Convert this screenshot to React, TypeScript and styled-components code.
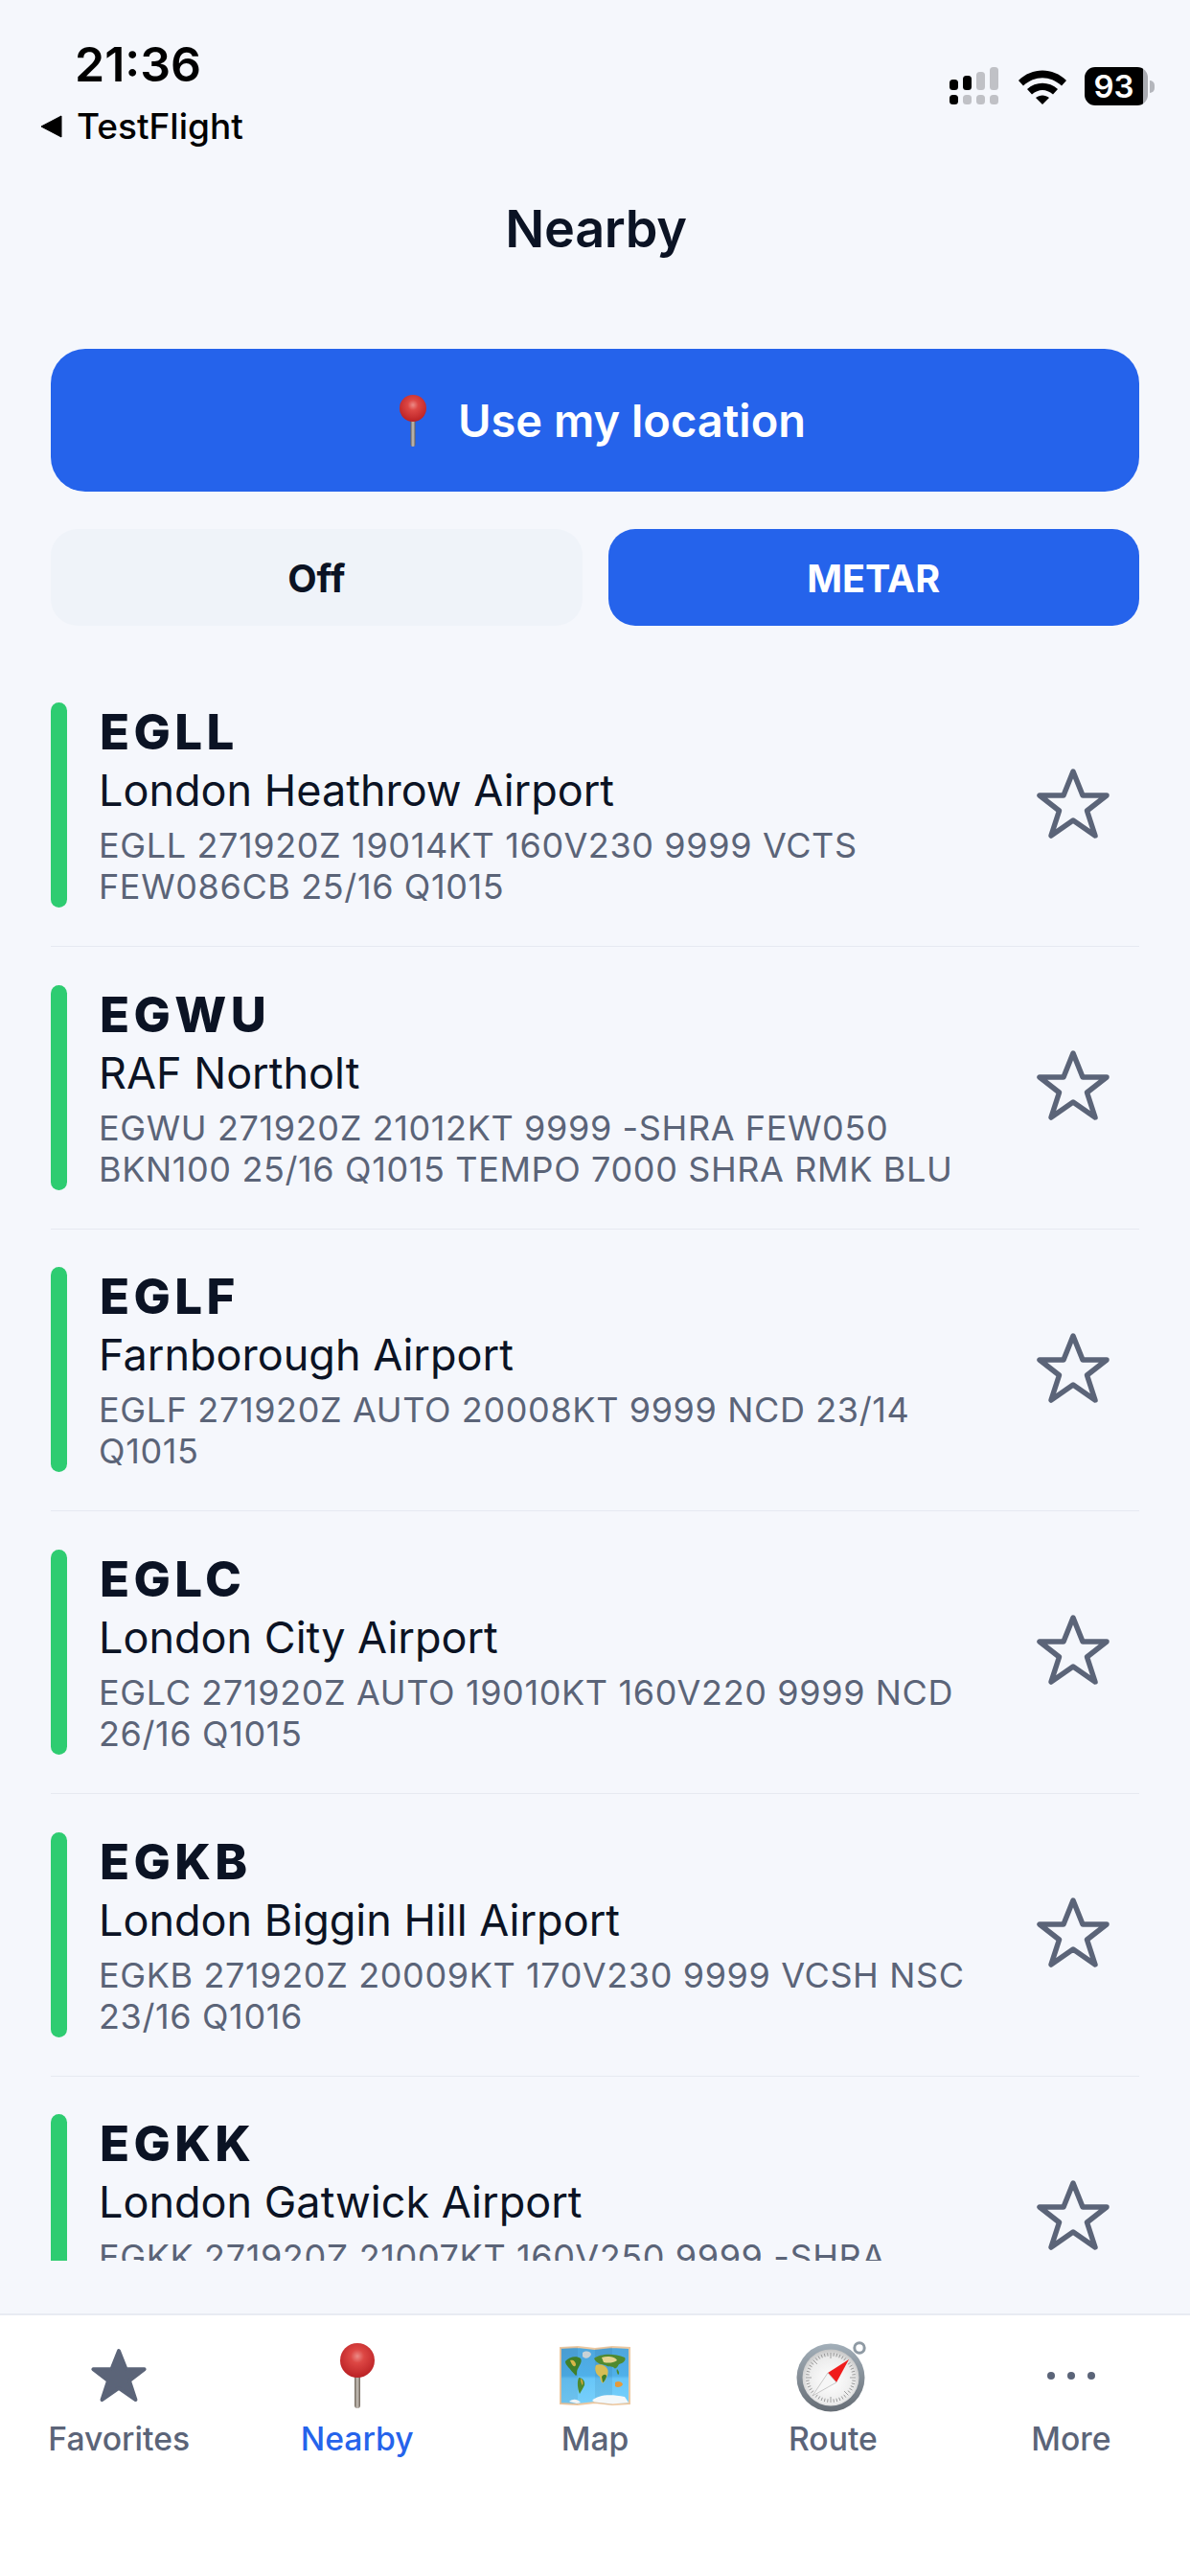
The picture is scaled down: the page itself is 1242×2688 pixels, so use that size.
import React from "react";
import styled, { createGlobalStyle } from "styled-components";

const Global = createGlobalStyle`
  html, body { margin: 0; padding: 0; background: #f5f7fc; }
  * { box-sizing: border-box; }
`;

const Page = styled.div`
  width: 1242px;
  height: 2688px;
  display: flex;
  flex-direction: column;
  background: #f5f7fc;
  font-family: Inter, "Noto Sans", sans-serif;
  color: #0b1324;
  overflow: hidden;
`;

const StatusBar = styled.div`
  height: 160px;
  flex: none;
  display: flex;
  justify-content: space-between;
  align-items: flex-start;
  padding: 38px 37px 0 42px;
`;

const StatusLeft = styled.div`
  display: flex;
  flex-direction: column;
  gap: 14px;
`;

const Clock = styled.div`
  font-size: 50px;
  line-height: 58px;
  font-weight: 600;
  color: #000;
  margin-left: 36px;
`;

const BackLink = styled.div`
  display: flex;
  align-items: center;
  gap: 15px;
  font-size: 37px;
  line-height: 44px;
  font-weight: 500;
  color: #000;
`;

const StatusRight = styled.div`
  display: flex;
  align-items: center;
  gap: 18px;
  margin-top: 32px;
`;

const BatteryWrap = styled.div`
  display: flex;
  align-items: center;
  gap: 2px;
`;

const BatteryBody = styled.div`
  width: 66px;
  height: 40px;
  border-radius: 11px;
  background: linear-gradient(90deg, #000 0 92%, #aaacb2 92% 100%);
  color: #fff;
  font-size: 33px;
  line-height: 40px;
  font-weight: 600;
  text-align: center;
  padding-right: 5px;
`;

const BatteryNub = styled.div`
  width: 5px;
  height: 13px;
  border-radius: 0 6px 6px 0;
  background: #b4b6bc;
`;

const Title = styled.h1`
  margin: 0;
  height: 44px;
  flex: none;
  font-size: 54px;
  line-height: 44px;
  font-weight: 600;
  letter-spacing: -0.3px;
  text-align: center;
  color: #0b1324;
  margin-top: 57px;
  padding-left: 2px;
`;

const Controls = styled.div`
  flex: none;
  display: flex;
  flex-direction: column;
  gap: 39px;
  padding: 103px 53px 0;
`;

const PrimaryButton = styled.div`
  height: 149px;
  border-radius: 36px;
  background: #2563eb;
  color: #fff;
  font-size: 47px;
  font-weight: 600;
  display: flex;
  align-items: center;
  justify-content: center;
  gap: 17px;
`;

const Segments = styled.div`
  display: grid;
  grid-template-columns: 1fr 1fr;
  gap: 27px;
`;

const Segment = styled.div<{ $active?: boolean }>`
  height: 101px;
  border-radius: 28px;
  background: ${(p) => (p.$active ? "#2563eb" : "#eff3f9")};
  color: ${(p) => (p.$active ? "#fff" : "#0b1324")};
  font-size: 39.5px;
  font-weight: 700;
  padding-top: 2px;
  display: flex;
  align-items: center;
  justify-content: center;
`;

const List = styled.div`
  flex: 1;
  min-height: 0;
  margin: 80px 53px 55px;
  overflow: hidden;
`;

const Row = styled.div`
  display: flex;
  align-items: stretch;
  gap: 33px;
  padding-bottom: 40px;
  margin-bottom: 39.67px;
  border-bottom: 1px solid #e6e9f1;
`;

const StatusStripe = styled.div`
  flex: none;
  width: 17px;
  border-radius: 9px;
  background: #2ecc71;
`;

const RowText = styled.div`
  flex: 1;
  min-width: 0;
  height: 214px;
  padding-top: 6px;
`;

const Code = styled.div`
  font-size: 51px;
  line-height: 50px;
  font-weight: 800;
  letter-spacing: 4.4px;
  margin-left: 1px;
  color: #0b1324;
`;

const AirportName = styled.div`
  font-size: 45px;
  line-height: 54px;
  font-weight: 400;
  color: #0b1324;
  margin-top: 9px;
`;

const Metar = styled.div`
  font-size: 36px;
  line-height: 43px;
  letter-spacing: 0.62px;
  color: #5b6478;
  margin-top: 9px;
  white-space: nowrap;
`;

const StarSlot = styled.div`
  flex: none;
  width: 86px;
  margin-right: 26px;
  padding-bottom: 3px;
  display: flex;
  align-items: center;
  justify-content: center;
`;

const TabBar = styled.div`
  flex: none;
  height: 274px;
  background: #fff;
  border-top: 2px solid #e8ebf2;
  display: grid;
  grid-template-columns: repeat(5, 1fr);
`;

const Tab = styled.div<{ $active?: boolean }>`
  display: flex;
  flex-direction: column;
  align-items: center;
  padding-top: 22px;
  color: ${(p) => (p.$active ? "#2563eb" : "#5b6478")};
  font-size: 33.7px;
  line-height: 40px;
  font-weight: 500;
`;

const TabIcon = styled.div`
  height: 82px;
  width: 100%;
  display: flex;
  align-items: center;
  justify-content: center;
  margin-bottom: 5px;
`;

const airports = [
  ["EGLL", "London Heathrow Airport", "EGLL 271920Z 19014KT 160V230 9999 VCTS", "FEW086CB 25/16 Q1015"],
  ["EGWU", "RAF Northolt", "EGWU 271920Z 21012KT 9999 -SHRA FEW050", "BKN100 25/16 Q1015 TEMPO 7000 SHRA RMK BLU"],
  ["EGLF", "Farnborough Airport", "EGLF 271920Z AUTO 20008KT 9999 NCD 23/14", "Q1015"],
  ["EGLC", "London City Airport", "EGLC 271920Z AUTO 19010KT 160V220 9999 NCD", "26/16 Q1015"],
  ["EGKB", "London Biggin Hill Airport", "EGKB 271920Z 20009KT 170V230 9999 VCSH NSC", "23/16 Q1016"],
  ["EGKK", "London Gatwick Airport", "EGKK 271920Z 21007KT 160V250 9999 -SHRA", ""],
];

const STAR = "M39 4 L49 29 L74 29 L53.5 45 L62 71 L39 55 L16 71 L24.5 45 L4 29 L29 29 Z";

const OutlineStar = () => (
  <svg width="78" height="76" viewBox="0 0 78 76" fill="none">
    <path d={STAR} stroke="#5b6478" strokeWidth="5.5" strokeLinejoin="round" />
  </svg>
);

const SolidStar = () => (
  <svg width="60" height="58" viewBox="0 0 78 76">
    <path d={STAR} fill="#5b6478" stroke="#5b6478" strokeWidth="5" strokeLinejoin="round" />
  </svg>
);

const Pin = ({ id, r, h, w, box }: { id: string; r: number; h: number; w: number; box: number }) => {
  const c = box / 2;
  return (
    <svg width={box} height={h} viewBox={`0 0 ${box} ${h}`}>
      <defs>
        <radialGradient id={id} cx="0.5" cy="0.38" r="0.65">
          <stop offset="0" stopColor="#ec8a86" />
          <stop offset="0.3" stopColor="#dd4744" />
          <stop offset="1" stopColor="#b81e22" />
        </radialGradient>
        <linearGradient id={id + "n"} x1="0" x2="1" y1="0" y2="0">
          <stop offset="0" stopColor="#6d6257" />
          <stop offset="0.5" stopColor="#c9c3bb" />
          <stop offset="1" stopColor="#6d6257" />
        </linearGradient>
      </defs>
      <rect x={c - w / 2} y={r * 1.8} width={w} height={h - r * 1.8} rx={w / 2} fill={`url(#${id}n)`} />
      <circle cx={c} cy={r} r={r} fill={`url(#${id})`} />
    </svg>
  );
};

const WorldMap = () => (
  <svg width="74" height="62" viewBox="0 0 74 62">
    <defs>
      <linearGradient id="sea" x1="0" x2="0" y1="0" y2="1">
        <stop offset="0" stopColor="#4ea6dc" />
        <stop offset="0.5" stopColor="#4fb0ea" />
        <stop offset="0.55" stopColor="#68c6f8" />
        <stop offset="1" stopColor="#78d0fb" />
      </linearGradient>
    </defs>
    <path d="M1 2 L19 1 L37 3 L55 1 L73 2 L73 60 L55 61 L37 59 L19 61 L1 60 Z" fill="url(#sea)" stroke="#edc8a0" strokeWidth="2" />
    <path d="M19 1 V61 L1 60 V2 Z M55 1 V61 L37 59 V3 Z" fill="#1a4f7a" opacity="0.1" />
    <path d="M6 16 C10 11 18 10 22 13 C24 16 21 20 19 24 C17 27 19 30 17 31 C14 28 11 24 9 22 C8 20 6 19 6 16 Z" fill="#3f7f2a" />
    <path d="M11 15 C14 14 17 16 17 20 C15 23 13 20 11 15 Z" fill="#d9b648" />
    <path d="M20 33 C24 33 27 37 26 41 C24 45 22 48 21 50 C19 45 18 38 20 33 Z" fill="#4e8a2f" />
    <path d="M22 34 C24 35 25 38 24 41 C23 40 22 37 22 34 Z" fill="#d9a93f" />
    <path d="M24 7 C28 4 33 6 33 9 C31 13 27 14 24 11 Z" fill="#c9d2d6" />
    <path d="M36 13 C42 8 56 7 68 12 C70 15 66 18 62 19 C60 23 58 25 56 22 C53 21 50 22 48 20 C44 19 39 19 36 13 Z" fill="#4f8a30" />
    <path d="M44 12 C50 10 58 11 60 15 C56 18 50 18 46 17 Z" fill="#e4d38f" />
    <path d="M38 20 C42 18 48 20 50 24 C52 28 49 34 46 38 C44 40 43 36 42 32 C38 30 36 24 38 20 Z" fill="#d8bd55" />
    <path d="M44 32 C46 29 49 29 49 32 C48 35 46 38 45 38 Z" fill="#3f7f2a" />
    <path d="M58 38 C61 36 65 37 66 40 C65 43 60 44 58 42 Z" fill="#e59a3a" />
    <path d="M60 24 C62 26 63 29 61 30 C60 28 59 26 60 24 Z" fill="#4e8a2f" />
    <path d="M34 57 C40 51 52 50 68 53 L72 59 L55 60.5 L37 58.5 Z" fill="#f4f8fa" />
    <path d="M10 58 C14 55 18 55 22 59 L18 60 Z" fill="#eef4f7" />
  </svg>
);

const ticks = Array.from({ length: 48 }, (_, i) => (i * 360) / 48);

const Compass = () => (
  <svg width="76" height="76" viewBox="0 0 76 76">
    <defs>
      <linearGradient id="rim" x1="0" y1="0" x2="0" y2="1">
        <stop offset="0" stopColor="#a3afb9" />
        <stop offset="1" stopColor="#666d75" />
      </linearGradient>
      <radialGradient id="dial" cx="0.5" cy="0.55" r="0.55">
        <stop offset="0" stopColor="#ffffff" />
        <stop offset="0.75" stopColor="#ececec" />
        <stop offset="1" stopColor="#c4c4c4" />
      </radialGradient>
    </defs>
    <circle cx="66" cy="9" r="5.2" fill="none" stroke="#8f9aa4" strokeWidth="3" />
    <circle cx="36" cy="40" r="35.5" fill="url(#rim)" />
    <circle cx="36" cy="40" r="29.5" fill="url(#dial)" />
    {ticks.map((a) => (
      <line key={a} x1="36" y1="14" x2="36" y2={a % 45 === 0 ? 20 : 17.5} stroke="#8d8d8d" strokeWidth="0.8" transform={`rotate(${a} 36 40)`} />
    ))}
    <path d="M55 21 L42 45 L33 35 Z" fill="#f01c1c" />
    <path d="M17 59 L33 35 L42 45 Z" fill="#f6f6f6" stroke="#a7a7a7" strokeWidth="0.6" />
  </svg>
);

const Dots = () => (
  <svg width="52" height="12" viewBox="0 0 52 12">
    <circle cx="5" cy="6" r="4" fill="#5b6478" />
    <circle cx="26" cy="6" r="4" fill="#5b6478" />
    <circle cx="47" cy="6" r="4" fill="#5b6478" />
  </svg>
);

const Signal = () => (
  <svg width="54" height="40" viewBox="0 0 54 40">
    <rect x="1" y="13" width="9" height="11" rx="3.5" fill="#000" />
    <rect x="15" y="9" width="9" height="15" rx="3.5" fill="#000" />
    <rect x="29" y="5" width="9" height="19" rx="3.5" fill="#c0c1c6" />
    <rect x="43" y="0" width="9" height="24" rx="3.5" fill="#c0c1c6" />
    <rect x="1" y="29" width="9" height="10" rx="3.5" fill="#000" />
    <rect x="15" y="29" width="9" height="10" rx="3.5" fill="#c0c1c6" />
    <rect x="29" y="29" width="9" height="10" rx="3.5" fill="#c0c1c6" />
    <rect x="43" y="29" width="9" height="10" rx="3.5" fill="#c0c1c6" />
  </svg>
);

const Wifi = () => (
  <svg width="52" height="38" viewBox="0 0 52 38">
    <path d="M1 13 C15 -1 37 -1 51 13 L46 18.5 C34 7.5 18 7.5 6 18.5 Z" fill="#000" />
    <path d="M10 22 C19 13.5 33 13.5 42 22 L37 27.5 C30 21.5 22 21.5 15 27.5 Z" fill="#000" />
    <path d="M19 31 C23 27.5 29 27.5 33 31 L26 38 Z" fill="#000" />
  </svg>
);

export default function App() {
  return (
    <Page>
      <Global />
      <StatusBar>
        <StatusLeft>
          <Clock>21:36</Clock>
          <BackLink>
            <svg width="23" height="24" viewBox="0 0 23 24">
              <path d="M22 1 V23 L1 12 Z" fill="#000" stroke="#000" strokeWidth="1" strokeLinejoin="round" />
            </svg>
            TestFlight
          </BackLink>
        </StatusLeft>
        <StatusRight>
          <Signal />
          <Wifi />
          <BatteryWrap>
            <BatteryBody>93</BatteryBody>
            <BatteryNub />
          </BatteryWrap>
        </StatusRight>
      </StatusBar>
      <Title>Nearby</Title>
      <Controls>
        <PrimaryButton>
          <Pin id="pinBtn" r={14} h={54} w={5} box={60} />
          Use my location
        </PrimaryButton>
        <Segments>
          <Segment>Off</Segment>
          <Segment $active>METAR</Segment>
        </Segments>
      </Controls>
      <List>
        {airports.map(([code, name, l1, l2]) => (
          <Row key={code}>
            <StatusStripe />
            <RowText>
              <Code>{code}</Code>
              <AirportName>{name}</AirportName>
              <Metar>
                {l1}
                <br />
                {l2}
              </Metar>
            </RowText>
            <StarSlot>
              <OutlineStar />
            </StarSlot>
          </Row>
        ))}
      </List>
      <TabBar>
        <Tab>
          <TabIcon><SolidStar /></TabIcon>
          Favorites
        </Tab>
        <Tab $active>
          <TabIcon><Pin id="pinTab" r={18} h={68} w={6} box={40} /></TabIcon>
          Nearby
        </Tab>
        <Tab>
          <TabIcon><WorldMap /></TabIcon>
          Map
        </Tab>
        <Tab>
          <TabIcon><Compass /></TabIcon>
          Route
        </Tab>
        <Tab>
          <TabIcon><Dots /></TabIcon>
          More
        </Tab>
      </TabBar>
    </Page>
  );
}
